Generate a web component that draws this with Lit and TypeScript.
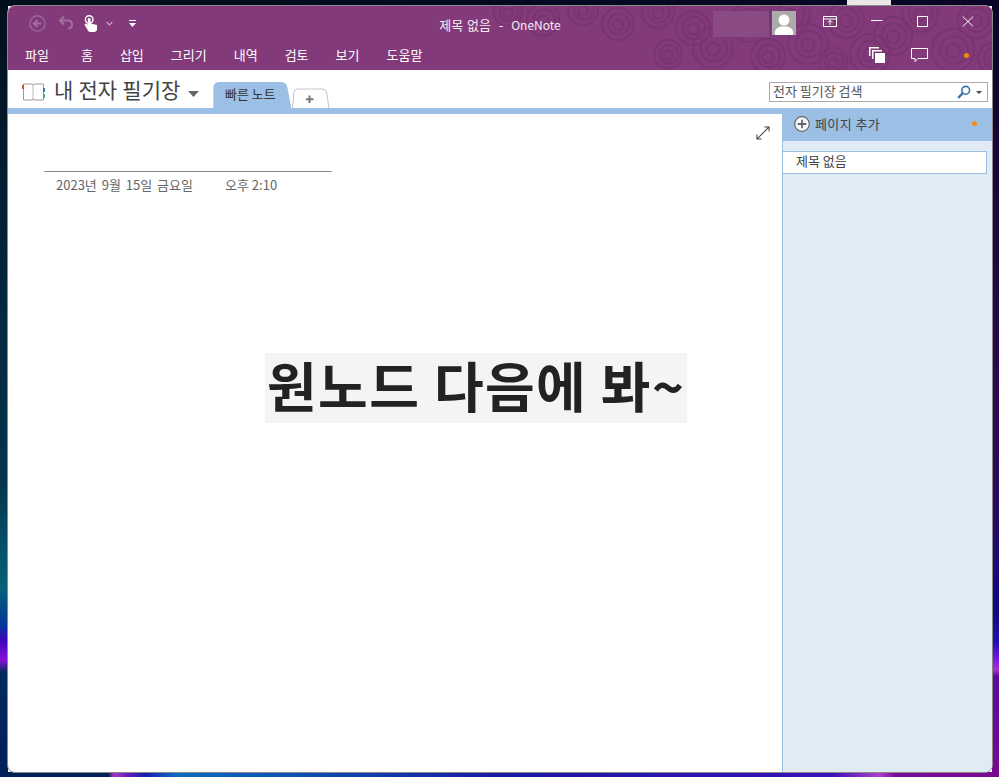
import { LitElement, html, css, svg } from 'lit';
import { customElement } from 'lit/decorators.js';

// swirl centres in the title bar, in title-bar coordinates
const SWIRLS = [
  [500, 6, 14], [535, 14, 16], [575, 4, 15], [610, 18, 16], [650, 6, 16], [685, 22, 17], [705, 42, 20], [742, 16, 20],
  [782, 8, 20], [800, 38, 20], [838, 14, 18], [862, 48, 20], [885, 30, 19], [912, 8, 18],
  [945, 44, 21], [968, 14, 18], [825, 56, 14], [760, 50, 17], [660, 48, 14], [985, 52, 15],
];

const TABS = ['홈', '삽입', '그리기', '내역', '검토', '보기', '도움말'];

@customElement('app-root')
export class AppRoot extends LitElement {
  static styles = css`
    :host {
      display: block;
      font-family: "Noto Sans CJK KR", "Liberation Sans", sans-serif;
    }
    .desktop {
      box-sizing: border-box;
      width: 999px;
      height: 777px;
      padding: 5px 6px 4px 7px;
      position: relative;
      background:
        linear-gradient(180deg, #010f1c 0, #03273f 300px, #04344c 480px, #056078 590px, #04389a 625px, #3a06b8 640px, #8a10d8 660px, #012a5c 672px, #012058 777px) left top / 8px 100% no-repeat,
        linear-gradient(180deg, #0b0426 0, #2a0a50 400px, #2a0a60 500px, #100a80 610px, #1a10a8 640px, #7a18e8 660px, #b030c8 670px, #5a0a9a 676px, #7a0a90 777px) right top / 7px 100% no-repeat,
        linear-gradient(90deg, #012058 0, #012058 108px, #a835c8 114px, #5a1ab8 130px, #1a1ab0 145px, #0a6ac0 175px, #0a50b0 300px, #1a1aa0 500px, #3a10b8 830px, #b040c8 880px, #7a0a9a 895px, #7a0a90 999px) left bottom / 100% 5px no-repeat,
        linear-gradient(90deg, #01101c, #030a20 500px, #0a0426) left top / 100% 6px no-repeat;
    }
    .thumb {
      position: absolute;
      left: 847px;
      top: 0;
      width: 44px;
      height: 5px;
      background: #e8e8e8;
    }
    .window {
      box-sizing: border-box;
      width: 986px;
      height: 768px;
      border: 1px solid #8a8a8a;
      border-radius: 8px;
      overflow: hidden;
      display: flex;
      flex-direction: column;
      background: #fff;
    }
    .chrome {
      position: relative;
      height: 64px;
      background: #823a7a;
      color: #fff;
      flex: none;
    }
    .swirls {
      position: absolute;
      left: 0;
      top: 0;
    }
    .title-row {
      position: relative;
      height: 34px;
      display: grid;
      grid-template-columns: 1fr auto 1fr;
      align-items: center;
      font-size: 13px;
    }
    .qat {
      display: flex;
      align-items: center;
      padding-left: 21px;
    }
    .qat .back {
      margin-right: 12px;
    }
    .qat .undo {
      margin: 0 10px 2px 0;
    }
    .qat .touch {
      margin-right: 9px;
    }
    .qat .more {
      margin-right: 16px;
    }
    .title {
      white-space: pre;
      padding-top: 2px;
      word-spacing: 1px;
      color: #f6eaf5;
    }
    .title .app {
      font-size: 12px;
    }
    .caption {
      display: flex;
      align-items: center;
      justify-content: flex-end;
    }
    .caption .btn {
      margin: 0 34px 3px 0;
    }
    .caption .btn.close {
      margin-right: 18px;
    }
    .user {
      width: 56px;
      height: 26px;
      margin-top: 2px;
      background: #8a4a84;
    }
    .avatar {
      display: block;
      margin: 0 27px 0 3px;
    }
    .ribbon-row {
      position: relative;
      height: 30px;
      display: flex;
      align-items: center;
      padding: 0 0 0 17px;
      font-size: 13px;
      gap: 27px;
    }
    .ribbon-row .file {
      margin-right: 5px;
    }
    .ribbon-row .tab {
      color: #fff;
      line-height: 18px;
      padding-bottom: 1px;
    }
    .ribbon-tools {
      margin-left: auto;
      display: flex;
      align-items: center;
      padding-right: 23px;
    }
    .ribbon-tools .stack {
      margin-right: 26px;
    }
    .ribbon-tools .comment {
      margin-right: 36px;
    }
    .dot {
      width: 5px;
      height: 5px;
      border-radius: 50%;
      background: #f28c10;
    }
    .notebar {
      height: 38px;
      flex: none;
      display: flex;
      align-items: flex-end;
      padding-left: 14px;
      position: relative;
    }
    .nb {
      display: flex;
      align-items: center;
      height: 38px;
      box-sizing: border-box;
      color: #444;
      font-size: 21px;
      word-spacing: 0.5px;
    }
    .nb svg.book {
      margin-right: 9px;
      margin-top: 5px;
    }
    .nb svg.caret {
      margin: 10px 14px 0 8px;
    }
    .section {
      width: 78px;
      height: 26px;
      background: #9bbfe5;
      clip-path: path('M0 26 L0 6 Q0 0 6 0 L67 0 Q73 0 74 5 L78 26 Z');
      text-align: center;
      font-size: 13px;
      line-height: 24px;
      color: #333;
      padding-right: 4px;
      box-sizing: border-box;
    }
    .add-tab {
      display: block;
      margin-left: 1px;
    }
    .search {
      position: absolute;
      right: 4px;
      top: 12px;
      box-sizing: border-box;
      width: 219px;
      height: 20px;
      border: 1px solid #ababab;
      display: flex;
      align-items: center;
      padding: 0 3px;
      font-size: 13px;
      color: #555;
    }
    .search span {
      flex: 1;
      line-height: 16px;
      padding-bottom: 2px;
    }
    .search .lens {
      margin-right: 5px;
    }
    .search .drop {
      margin-right: 2px;
    }
    .strip {
      height: 6px;
      background: #9bbfe5;
      flex: none;
    }
    .body {
      flex: 1;
      display: flex;
      min-height: 0;
    }
    .page {
      flex: 1;
      position: relative;
      padding: 57px 0 0 36px;
    }
    .expand {
      position: absolute;
      right: 12px;
      top: 12px;
    }
    .rule {
      width: 288px;
      height: 1px;
      background: #8a8a8a;
    }
    .meta {
      display: flex;
      padding: 4px 0 0 12px;
      font-size: 13px;
      line-height: 17px;
      color: #666;
    }
    .meta .date {
      width: 169px;
      word-spacing: 2px;
    }
    .note {
      margin: 160px 0 0 221px;
      width: 422px;
      height: 70px;
      background: #f4f4f4;
      color: #222;
      font-size: 54px;
      font-weight: 700;
      line-height: 64px;
      letter-spacing: 1.4px;
      white-space: nowrap;
      padding-left: 2px;
      box-sizing: border-box;
    }
    .pane {
      width: 210px;
      flex: none;
      box-sizing: border-box;
      border-left: 1px solid #9bbfe5;
      background: #e1ebf5;
    }
    .pane-head {
      height: 27px;
      margin-left: -1px;
      background: #9bbfe5;
      display: flex;
      align-items: center;
      padding: 0 15px 8px 12px;
      box-sizing: border-box;
      font-size: 13px;
      letter-spacing: 0.4px;
      color: #444;
    }
    .pane-head svg {
      margin-right: 5px;
    }
    .pane-head .dot {
      margin-left: auto;
    }
    .item {
      margin: 10px 5px 0 -1px;
      height: 23px;
      box-sizing: border-box;
      border: 1px solid #9bbfe5;
      background: #fff;
      font-size: 13px;
      line-height: 18px;
      padding-left: 13px;
      color: #444;
    }
  `;

  private swirls() {
    return html`<svg class="swirls" width="984" height="64" fill="none" stroke="#783570" stroke-width="2">
      ${SWIRLS.map(([x, y, r]) => svg`
        <circle cx=${x} cy=${y} r=${r}></circle>
        <circle cx=${x + 1} cy=${y} r=${r * 0.66}></circle>
        <circle cx=${x} cy=${y + 1} r=${r * 0.33}></circle>`)}
    </svg>`;
  }

  private qat() {
    return html`<div class="qat">
      <svg class="back" width="17" height="17" viewBox="0 0 17 17" fill="none" stroke="#a26f9d" stroke-width="1.2">
        <circle cx="8.5" cy="8.5" r="7.6"></circle>
        <path d="M12.5 8.5H5M8.5 5 5 8.5 8.5 12" stroke-width="2"></path>
      </svg>
      <svg class="undo" width="16" height="15" viewBox="0 0 16 15" fill="none" stroke="#a26f9d" stroke-width="2">
        <path d="M6 1.5 1.8 5.5 6 9.5M2 5.5H9.5Q14 5.5 14 9.5T10 13.5"></path>
      </svg>
      <svg class="touch" width="13" height="17" viewBox="0 0 13 17" fill="#fff">
        <circle cx="5.2" cy="4.500" r="3.800" fill="none" stroke="#fff" stroke-width="1.400"></circle>
        <path d="M3.800 4.500v5L1.600 8.400.4 9.600l3.400 5.600c.6 1 1.400 1.800 2.700 1.800h3.600c1.600 0 2.900-1.300 2.900-3V10L6.600 8.500v-4a1.400 1.400 0 0 0-2.800 0z"></path>
      </svg>
      <svg class="more" width="7" height="5" viewBox="0 0 7 5" fill="none" stroke="#c9a6c5" stroke-width="1.2">
        <path d="M.7 1 3.500 3.800 6.300 1"></path>
      </svg>
      <svg width="7" height="7" viewBox="0 0 7 7" fill="#fff">
        <rect y="0" width="7" height="1"></rect>
        <path d="M0 3H7L3.500 7Z"></path>
      </svg>
    </div>`;
  }

  private caption() {
    return html`<div class="caption">
      <div class="user"></div>
      <svg class="avatar" width="24" height="24" viewBox="0 0 24 24">
        <rect width="24" height="24" fill="#ababab"></rect>
        <ellipse cx="12" cy="9" rx="5.400" ry="5.600" fill="#fff"></ellipse>
        <path d="M3 24v-3c0-3 3.500-4.600 6-5.400h6c2.500.8 6 2.400 6 5.400v3z" fill="#fff"></path>
      </svg>
      <svg class="btn" width="14" height="11" viewBox="0 0 14 11" fill="none" stroke="#fff">
        <path d="M.5.500h13v10H.5zM.5 3h13M7 9V4.500M4.800 6.500 7 4.300 9.200 6.500"></path>
      </svg>
      <svg class="btn" width="12" height="11" viewBox="0 0 12 11" fill="none" stroke="#fff">
        <path d="M0 4.500h11.500"></path>
      </svg>
      <svg class="btn" width="11" height="11" viewBox="0 0 11 11" fill="none" stroke="#fff">
        <rect x=".5" y=".5" width="10" height="10"></rect>
      </svg>
      <svg class="btn close" width="12" height="11" viewBox="0 0 12 11" fill="none" stroke="#fff">
        <path d="M.8.500 11.200 10.500M11.200.500 .8 10.500"></path>
      </svg>
    </div>`;
  }

  render() {
    return html`<div class="desktop">
      <div class="thumb"></div>
      <div class="window">
        <div class="chrome">
          ${this.swirls()}
          <div class="title-row">
            ${this.qat()}
            <div class="title">제목 없음  -  <span class="app">OneNote</span></div>
            ${this.caption()}
          </div>
          <div class="ribbon-row">
            <div class="tab file">파일</div>
            ${TABS.map(t => html`<div class="tab">${t}</div>`)}
            <div class="ribbon-tools">
              <svg class="stack" width="16" height="16" viewBox="0 0 16 16">
                <path d="M0 0h10v1.500H1.500V9H0z" fill="#fff"></path>
                <path d="M3 3h10v1.500H4.500V12H3z" fill="#fff"></path>
                <rect x="6" y="6" width="10" height="10" fill="#fff"></rect>
              </svg>
              <svg class="comment" width="17" height="15" viewBox="0 0 17 15" fill="none" stroke="#fff">
                <path d="M.5.500h16v10H7l-3 3v-3H.5z"></path>
              </svg>
              <div class="dot"></div>
            </div>
          </div>
        </div>
        <div class="notebar">
          <div class="nb">
            <svg class="book" width="23" height="18" viewBox="0 0 23 18" fill="none">
              <path d="M1.500 1h8l1.500 1 1.500-1h9v16h-9l-1.500-.8-1.500.8h-8z" stroke="#999"></path>
              <path d="M11 2v14" stroke="#bbb"></path>
              <rect x="0" y="2" width="2" height="4" fill="#d9502e"></rect>
              <rect x="21" y="5" width="2" height="4" fill="#3a78b8"></rect>
              <rect x="21" y="11" width="2" height="4" fill="#5a9e8e"></rect>
            </svg>
            내 전자 필기장
            <svg class="caret" width="11" height="6" viewBox="0 0 11 6"><path d="M0 0H11L5.500 6Z" fill="#666"></path></svg>
          </div>
          <div class="section">빠른 노트</div>
          <svg class="add-tab" width="38" height="20" viewBox="0 0 38 20" fill="none">
            <path d="M.5 20 2 4Q2.500 1 6 1H30Q34 1 34.500 4L37 20" stroke="#c4c4c4" fill="#fff"></path>
            <path d="M17.500 7.500V15M14 11.200h7.500" stroke="#777" stroke-width="2"></path>
          </svg>
          <div class="search">
            <span>전자 필기장 검색</span>
            <svg class="lens" width="14" height="14" viewBox="0 0 14 14" fill="none">
              <circle cx="8.700" cy="5.300" r="3.900" stroke="#3d73a8" stroke-width="1.600"></circle>
              <path d="M5.800 8.200 1.200 12.800" stroke="#3d73a8" stroke-width="2.400"></path>
            </svg>
            <svg class="drop" width="6" height="3" viewBox="0 0 6 3"><path d="M0 0H6L3 3Z" fill="#444"></path></svg>
          </div>
        </div>
        <div class="strip"></div>
        <div class="body">
          <div class="page">
            <svg class="expand" width="14" height="14" viewBox="0 0 15 15" fill="none" stroke="#444" stroke-width="1.100">
              <path d="M1 14 14 1M9 1h5v5M1 9v5h5"></path>
            </svg>
            <div class="rule"></div>
            <div class="meta"><div class="date">2023년 9월 15일 금요일</div><div>오후 2:10</div></div>
            <div class="note">원노드 다음에 봐~</div>
          </div>
          <div class="pane">
            <div class="pane-head">
              <svg width="16" height="16" viewBox="0 0 16 16" fill="#f4f7fb" stroke="#666" stroke-width="1.200">
                <circle cx="8" cy="8" r="7.300"></circle>
                <path d="M8 3.800v8.400M3.800 8h8.400" stroke-width="1.800"></path>
              </svg>
              페이지 추가
              <div class="dot"></div>
            </div>
            <div class="item">제목 없음</div>
          </div>
        </div>
      </div>
    </div>`;
  }
}
